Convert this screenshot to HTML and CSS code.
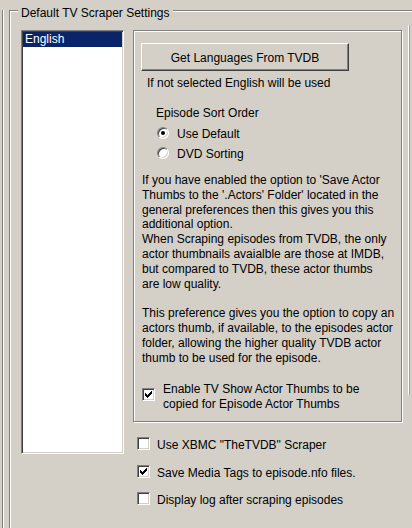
FILE: index.html
```html
<!DOCTYPE html>
<html>
<head>
<meta charset="utf-8">
<link rel="stylesheet" href="styles.css">
</head>
<body>
<div class="frame">
  <div class="frame-inner">
    <div class="group">
      <span class="group-label">Default TV Scraper Settings</span>
      <div class="group-body">
        <div class="listbox">
          <div class="list-item selected">English</div>
        </div>
        <div class="right-col">
          <div class="panel">
            <button class="btn" type="button">Get Languages From TVDB</button>
            <p class="hint">If not selected English will be used</p>
            <p class="sort-title">Episode Sort Order</p>
            <label class="radio-row first"><span class="radio checked"></span><span>Use Default</span></label>
            <label class="radio-row"><span class="radio"></span><span>DVD Sorting</span></label>
            <p class="info">If you have enabled the option to 'Save Actor<br>Thumbs to the '.Actors' Folder' located in the<br>general preferences then this gives you this<br>additional option.<br>When Scraping episodes from TVDB, the only<br>actor thumbnails avaialble are those at IMDB,<br>but compared to TVDB, these actor thumbs<br>are low quality.<br><br>This preference gives you the option to copy an<br>actors thumb, if available, to the episodes actor<br>folder, allowing the higher quality TVDB actor<br>thumb to be used for the episode.</p>
            <label class="check-row panel-check">
              <span class="check"><svg width="7" height="7" viewBox="0 0 7 7" shape-rendering="crispEdges"><path d="M0 2h1v3H0zM1 3h1v3H1zM2 4h1v3H2zM3 3h1v3H3zM4 2h1v3H4zM5 1h1v3H5zM6 0h1v3H6z" fill="#000"/></svg></span>
              <span class="check-text">Enable TV Show Actor Thumbs to be<br>copied for Episode Actor Thumbs</span>
            </label>
          </div>
          <div class="options">
            <label class="check-row opt"><span class="check"></span><span class="opt-text">Use XBMC "TheTVDB" Scraper</span></label>
            <label class="check-row opt"><span class="check"><svg width="7" height="7" viewBox="0 0 7 7" shape-rendering="crispEdges"><path d="M0 2h1v3H0zM1 3h1v3H1zM2 4h1v3H2zM3 3h1v3H3zM4 2h1v3H4zM5 1h1v3H5zM6 0h1v3H6z" fill="#000"/></svg></span><span class="opt-text">Save Media Tags to episode.nfo files.</span></label>
            <label class="check-row opt"><span class="check"></span><span class="opt-text">Display log after scraping episodes</span></label>
          </div>
        </div>
        <div class="edge"></div>
      </div>
    </div>
  </div>
</div>
</body>
</html>
```
FILE: styles.css
```css
html, body {
  margin: 0;
  padding: 0;
}
body {
  background: #D4D0C8;
  font-family: "Liberation Sans", Arial, sans-serif;
  font-size: 12px;
  color: #000;
  width: 412px;
  height: 528px;
  overflow: hidden;
}
p { margin: 0; }

.frame {
  margin-left: 2px;
  border-left: 1px solid #808080;
  height: 528px;
  box-sizing: border-box;
}
.frame-inner {
  border-left: 1px solid #fff;
  padding-left: 5px;
  height: 100%;
  box-sizing: border-box;
}

.group {
  position: relative;
  margin-top: 10px;
  width: 403px;
  height: 518px;
  box-sizing: border-box;
  border-top: 1px solid #808080;
  border-left: 1px solid #808080;
  box-shadow: inset 1px 1px 0 #fff;
  padding: 19px 0 0 11px;
}
.group-label {
  position: absolute;
  top: -5px;
  left: 8px;
  padding: 0 3px;
  background: #D4D0C8;
  line-height: 14px;
  white-space: nowrap;
}

.group-body {
  display: flex;
  align-items: flex-start;
}

.listbox {
  width: 103px;
  height: 424px;
  box-sizing: border-box;
  border: 1px solid;
  border-color: #808080 #fff #fff #808080;
  box-shadow: inset 1px 1px 0 #404040, inset -1px -1px 0 #D4D0C8;
  background: #fff;
  padding: 1px;
  flex: none;
}
.list-item {
  height: 15px;
  line-height: 15px;
  padding-left: 2px;
}
.list-item.selected {
  background: #0A246A;
  color: #fff;
}

.right-col {
  margin-left: 9px;
  width: 269px;
  display: flex;
  flex-direction: column;
  flex: none;
}

.panel {
  height: 392px;
  box-sizing: border-box;
  border: 1px solid #808080;
  box-shadow: inset 1px 1px 0 #fff, 1px 1px 0 #fff;
  display: flex;
  flex-direction: column;
  align-items: flex-start;
}

.btn {
  display: block;
  margin: 12px 0 0 7px;
  width: 208px;
  height: 28px;
  box-sizing: border-box;
  border: 1px solid;
  border-color: #fff #404040 #404040 #fff;
  box-shadow: inset -1px -1px 0 #808080;
  background: #D4D0C8;
  font: inherit;
  color: #000;
  padding: 2px 0 0;
  line-height: 14px;
}

.hint {
  margin: 5px 0 0 13px;
  line-height: 14px;
}
.sort-title {
  margin: 16px 0 0 22px;
  line-height: 14px;
}

.radio-row {
  display: flex;
  align-items: flex-start;
  gap: 8px;
  margin: 6px 0 0 23px;
  height: 14px;
  line-height: 14px;
}
.radio-row.first { margin-top: 7px; }

.radio {
  position: relative;
  flex: none;
  width: 12px;
  height: 12px;
  box-sizing: border-box;
  border-radius: 50%;
  border: 1px solid;
  border-color: #808080 #fff #fff #808080;
  box-shadow: inset 1px 1px 0 #404040, inset -1px -1px 0 #D4D0C8;
  background: #fff;
}
.radio.checked::after {
  content: "";
  position: absolute;
  left: 3px;
  top: 3px;
  width: 4px;
  height: 4px;
  border-radius: 50%;
  background: #000;
}

.info {
  margin: 12px 0 0 8px;
  line-height: 14.8px;
  white-space: nowrap;
}

.check-row {
  display: flex;
  align-items: flex-start;
}
.check {
  flex: none;
  width: 13px;
  height: 13px;
  box-sizing: border-box;
  border: 1px solid;
  border-color: #808080 #fff #fff #808080;
  box-shadow: inset 1px 1px 0 #404040, inset -1px -1px 0 #D4D0C8;
  background: #fff;
  display: flex;
  align-items: center;
  justify-content: center;
}
.check svg { display: block; }

.panel-check {
  margin: 17px 0 0 8px;
  gap: 8px;
}
.panel-check .check { margin-top: 6px; }
.check-text {
  line-height: 14.4px;
  white-space: nowrap;
}

.options {
  display: flex;
  flex-direction: column;
  gap: 12.5px;
  margin-top: 15px;
}
.opt {
  margin-left: 4px;
  gap: 7px;
}
.opt-text {
  padding-top: 1px;
  line-height: 14px;
  white-space: nowrap;
}

.edge {
  flex: none;
  margin: -5px 0 0 6px;
  width: 1px;
  height: 370px;
  border-left: 1px solid #fff;
  background: #a0a0a0;
}
```
